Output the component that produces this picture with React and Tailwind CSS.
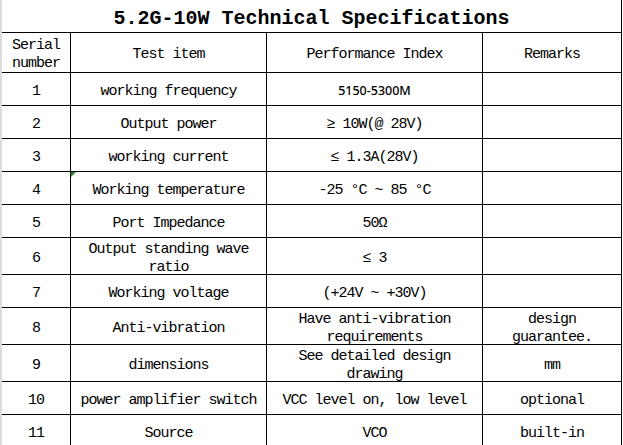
import React from "react";

const mono = { fontFamily: '"Liberation Mono", "DejaVu Sans Mono", monospace' };

const rows = [
  { n: "1", item: ["working frequency"], perf: ["5150-5300M"], sans: true, rem: [], h: "h-[33px]" },
  { n: "2", item: ["Output power"], perf: ["≥ 10W(@ 28V)"], rem: [], h: "h-[33px]" },
  { n: "3", item: ["working current"], perf: ["≤ 1.3A(28V)"], rem: [], h: "h-[33px]" },
  { n: "4", item: ["Working temperature"], perf: ["-25 °C ~ 85 °C"], rem: [], h: "h-[33px]", flag: true },
  { n: "5", item: ["Port Impedance"], perf: ["50Ω"], rem: [], h: "h-[33px]" },
  { n: "6", item: ["Output standing wave", "ratio"], perf: ["≤ 3"], rem: [], h: "h-[37px]" },
  { n: "7", item: ["Working voltage"], perf: ["(+24V ~ +30V)"], rem: [], h: "h-[33px]" },
  { n: "8", item: ["Anti-vibration"], perf: ["Have anti-vibration", "requirements"], rem: ["design", "guarantee."], h: "h-[37px]" },
  { n: "9", item: ["dimensions"], perf: ["See detailed design", "drawing"], rem: ["mm"], h: "h-[37px]" },
  { n: "10", item: ["power amplifier switch"], perf: ["VCC level on, low level"], rem: ["optional"], h: "h-[33px]" },
  { n: "11", item: ["Source"], perf: ["VCO"], rem: ["built-in"], h: "h-[33px]" },
];

function Lines({ lines }) {
  return (
    <div className="flex flex-col items-center leading-[18px]">
      {lines.map((l, i) => (
        <span key={i} className="whitespace-pre">{l}</span>
      ))}
    </div>
  );
}

function Cell({ w, children, last, extra = "" }) {
  return (
    <div
      className={`${w} shrink-0 flex items-center justify-center pt-[5px] border-b border-black ${last ? "" : "border-r"} ${extra}`}
    >
      {children}
    </div>
  );
}

export default function App() {
  return (
    <div className="w-[623px] h-[445px] overflow-hidden bg-white flex text-black text-[15px] tracking-[-1px]" style={mono}>
      <div className="w-[2px] shrink-0 bg-[#dcdcdc]" />
      <div className="w-[620px] shrink-0 border-r border-black flex flex-col">
        <div className="h-[32px] shrink-0 flex items-center justify-center pt-[6px] text-[20px] font-bold tracking-[0px]">
          5.2G-10W Technical Specifications
        </div>
        <div className="border-t border-black flex flex-col">
          <div className="flex h-[40px]">
            <Cell w="w-[69px]"><Lines lines={["Serial", "number"]} /></Cell>
            <Cell w="w-[196px]"><Lines lines={["Test item"]} /></Cell>
            <Cell w="w-[216px]"><Lines lines={["Performance Index"]} /></Cell>
            <Cell w="w-[138px]" last><Lines lines={["Remarks"]} /></Cell>
          </div>
          {rows.map((r) => (
            <div key={r.n} className={`flex shrink-0 ${r.h}`}>
              <Cell w="w-[69px]"><Lines lines={[r.n]} /></Cell>
              <Cell w="w-[196px]" extra="relative">
                {r.flag && (
                  <svg className="absolute left-0 top-0" width="6" height="6" viewBox="0 0 6 6">
                    <polygon points="0,0 5,0 0,5" fill="#1f8a2a" />
                  </svg>
                )}
                <Lines lines={r.item} />
              </Cell>
              <Cell w="w-[216px]">
                {r.sans ? (
                  <span className="text-[12.5px] font-medium tracking-[0px]" style={{ fontFamily: '"Noto Sans", "Liberation Sans", sans-serif' }}>
                    {r.perf[0]}
                  </span>
                ) : (
                  <Lines lines={r.perf} />
                )}
              </Cell>
              <Cell w="w-[138px]" last><Lines lines={r.rem} /></Cell>
            </div>
          ))}
        </div>
      </div>
    </div>
  );
}
